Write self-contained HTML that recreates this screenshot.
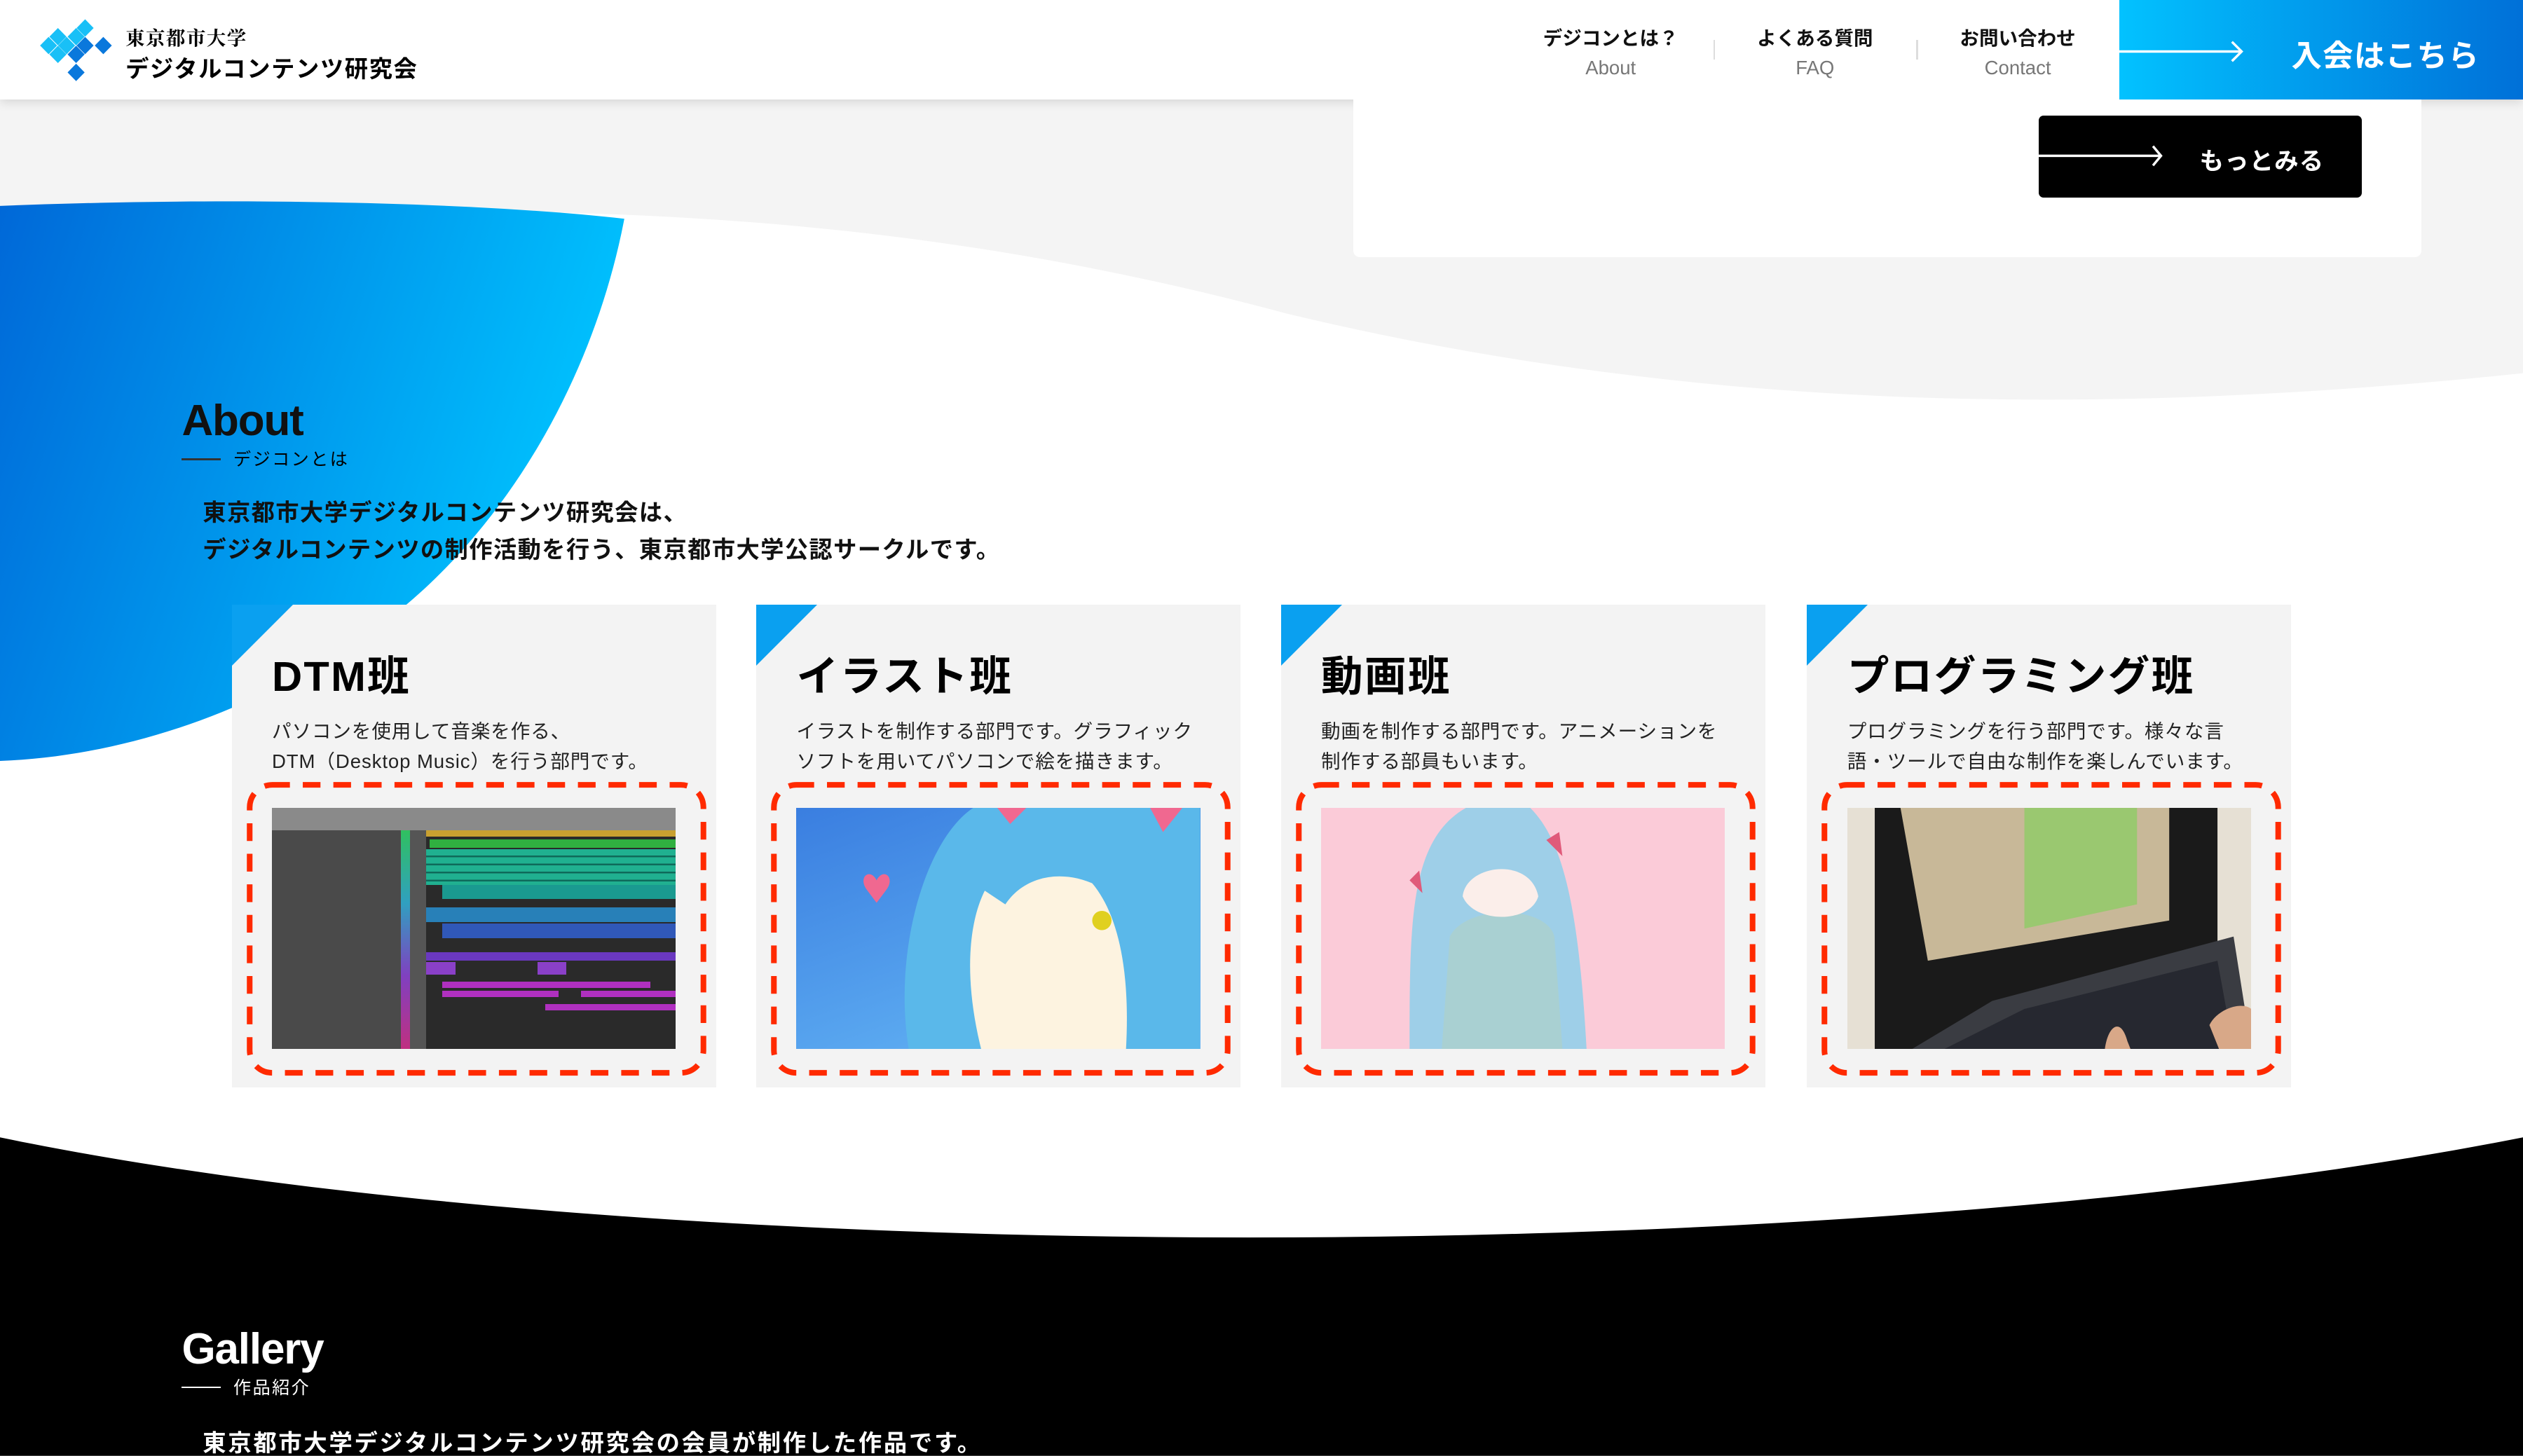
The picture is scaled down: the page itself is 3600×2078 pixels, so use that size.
<!DOCTYPE html>
<html><head><meta charset="utf-8"><style>
html,body{margin:0;padding:0;background:#f4f4f4;overflow:hidden}
#root{width:1568px;height:905px;position:relative;zoom:2.29592;font-family:"Liberation Sans","Noto Sans CJK JP",sans-serif;overflow:hidden;background:#f4f4f4}
.abs{position:absolute}
.nav{position:absolute;top:0;text-align:center;width:120px}
.nav b{display:block;font-size:12px;margin-top:14px;color:#111}
.nav span{display:block;font-size:12px;color:#777;margin-top:4px}
.card{position:absolute;top:376px;width:301px;height:300px;background:#f3f3f3;overflow:hidden}
.card .tri{position:absolute;left:0;top:0;width:0;height:0;border-top:38px solid #0aa0f0;border-right:38px solid transparent}
.card h3{position:absolute;left:25px;margin:0;font-size:26px;font-weight:bold;top:24px;letter-spacing:1px}
.card p{position:absolute;left:25px;top:69px;margin:0;font-size:12px;line-height:19px;letter-spacing:0.4px;color:#222;white-space:nowrap}
.card .img{position:absolute;left:25px;top:126px;width:251px;height:150px;overflow:hidden}
.card svg.dash{position:absolute;left:0;top:0}
</style></head><body><div id="root">
<svg class="abs" style="left:0;top:0" width="1568" height="905">
<path d="M0,136 C300,128 520,120 800,195 C1050,255 1300,260 1568,232 L1568,905 L0,905Z" fill="#fff"/>
<defs><linearGradient id="bg1" x1="0" y1="0" x2="1" y2="0.3"><stop offset="0" stop-color="#0068d8"/><stop offset="1" stop-color="#00c4ff"/></linearGradient>
<linearGradient id="bg2" x1="0" y1="0" x2="1" y2="0"><stop offset="0" stop-color="#02c2ff"/><stop offset="1" stop-color="#0070d8"/></linearGradient></defs>
<path d="M0,128 C150,122 300,126 388,136 C370,230 320,320 250,378 C170,440 80,470 0,473Z" fill="url(#bg1)"/>
<path d="M0,707 C400,790 1150,790 1568,707 L1568,905 L0,905Z" fill="#000"/>
</svg>
<div class="abs" style="left:0;top:0;width:1568px;height:62px;background:#fff;box-shadow:0 2px 6px rgba(0,0,0,.12)"></div>
<svg class="abs" style="left:0;top:0" width="80" height="62">
<g fill="#19c0f7">
<path d="M52.9,12 l5.3,5.4 -5.3,5.4 -5.3,-5.4z"/>
<path d="M36,17.4 l5.3,5.4 -5.3,5.4 -5.3,-5.4z"/>
<path d="M47.3,17.4 l5.3,5.4 -5.3,5.4 -5.3,-5.4z"/>
<path d="M30.2,22.9 l5.3,5.4 -5.3,5.4 -5.3,-5.4z"/>
<path d="M41.4,22.9 l5.3,5.4 -5.3,5.4 -5.3,-5.4z"/>
<path d="M36,28.4 l5.3,5.4 -5.3,5.4 -5.3,-5.4z"/>
</g><g fill="#0a78dc">
<path d="M52.9,22.9 l5.3,5.4 -5.3,5.4 -5.3,-5.4z"/>
<path d="M64.2,22.9 l5.3,5.4 -5.3,5.4 -5.3,-5.4z"/>
<path d="M47.3,28.4 l5.3,5.4 -5.3,5.4 -5.3,-5.4z"/>
<path d="M47.3,39.6 l5.3,5.4 -5.3,5.4 -5.3,-5.4z"/>
</g></svg>
<div class="abs" style="left:78px;top:14px;font-size:12px;font-weight:bold;letter-spacing:0.6px;font-family:'Noto Serif CJK SC',serif">東京都市大学</div>
<div class="abs" style="left:78px;top:31px;font-size:14.5px;font-weight:bold;letter-spacing:0.7px">デジタルコンテンツ研究会</div>
<div class="nav" style="left:941px"><b>デジコンとは？</b><span>About</span></div>
<div class="abs" style="left:1065px;top:25px;width:1px;height:12px;background:#ddd"></div>
<div class="nav" style="left:1068px"><b>よくある質問</b><span>FAQ</span></div>
<div class="abs" style="left:1191px;top:25px;width:1px;height:12px;background:#ddd"></div>
<div class="nav" style="left:1194px"><b>お問い合わせ</b><span>Contact</span></div>
<svg class="abs" style="left:1317px;top:0" width="251" height="62">
<rect width="251" height="62" fill="url(#bg2)"/>
<path d="M0,32 H75 M70,26 L76,32 70,38" stroke="#fff" stroke-width="1.5" fill="none"/>
</svg>
<div class="abs" style="left:1424px;top:19px;color:#fff;font-size:19px;font-weight:bold;letter-spacing:0.5px">入会はこちら</div>
<div class="abs" style="left:841px;top:62px;width:664px;height:98px;background:#fff;border-radius:0 0 4px 4px"></div>
<div class="abs" style="left:1267px;top:72px;width:201px;height:51px;background:#000;border-radius:3px"></div>
<svg class="abs" style="left:1267px;top:72px" width="90" height="51"><path d="M0,25 H75 M71,19 L76,25 71,31" stroke="#fff" stroke-width="1.5" fill="none"/></svg>
<div class="abs" style="left:1367px;top:88px;color:#fff;font-size:15px;font-weight:bold;letter-spacing:0.5px">もっとみる</div>
<div class="abs" style="left:113px;top:246px;font-size:27px;font-weight:bold;color:#111;letter-spacing:-0.5px">About</div>
<div class="abs" style="left:113px;top:285px;width:24px;height:1px;background:#333"></div>
<div class="abs" style="left:145px;top:277px;font-size:11px;letter-spacing:1px">デジコンとは</div>
<div class="abs" style="left:126px;top:308px;font-size:14.5px;font-weight:bold;line-height:23px;color:#111;letter-spacing:0.6px">東京都市大学デジタルコンテンツ研究会は、<br>デジタルコンテンツの制作活動を行う、東京都市大学公認サークルです。</div>

<div class="card" style="left:144px"><div class="tri"></div><h3>DTM班</h3><p>パソコンを使用して音楽を作る、<br>DTM（Desktop Music）を行う部門です。</p>
<div class="img" style="background:#2a2a2a">
<div class="abs" style="left:0;top:0;width:251px;height:14px;background:#8a8a8a"></div>
<div class="abs" style="left:0;top:14px;width:80px;height:136px;background:#4a4a4a"></div>
<div class="abs" style="left:80px;top:14px;width:6px;height:136px;background:linear-gradient(#30c060,#30a0c0,#8040c0,#c03080)"></div>
<div class="abs" style="left:86px;top:14px;width:10px;height:136px;background:#555"></div>
<div class="abs" style="left:96px;top:14px;width:155px;height:4px;background:#c9a030"></div>
<div class="abs" style="left:98px;top:20px;width:153px;height:5px;background:#30b040"></div>
<div class="abs" style="left:96px;top:26px;width:155px;height:22px;background:repeating-linear-gradient(#20b090 0 4px,#0f6a5a 4px 5px)"></div>
<div class="abs" style="left:106px;top:48px;width:145px;height:9px;background:#1a9a90"></div>
<div class="abs" style="left:96px;top:62px;width:155px;height:9px;background:#2880b8"></div>
<div class="abs" style="left:106px;top:72px;width:145px;height:9px;background:#3058b8"></div>
<div class="abs" style="left:96px;top:90px;width:155px;height:5px;background:#6a38c0"></div>
<div class="abs" style="left:96px;top:96px;width:18px;height:8px;background:#8a40c8"></div>
<div class="abs" style="left:165px;top:96px;width:18px;height:8px;background:#8a40c8"></div>
<div class="abs" style="left:106px;top:108px;width:65px;height:4px;background:#b030c0"></div>
<div class="abs" style="left:106px;top:114px;width:72px;height:4px;background:#b030c0"></div>
<div class="abs" style="left:170px;top:108px;width:65px;height:4px;background:#b030c0"></div>
<div class="abs" style="left:192px;top:114px;width:59px;height:4px;background:#b030c0"></div>
<div class="abs" style="left:170px;top:122px;width:81px;height:4px;background:#b030c0"></div>
</div>
<svg class="dash" width="301" height="300"><rect x="11" y="112" width="282" height="179" rx="14" fill="none" stroke="#ff2a00" stroke-width="3.5" stroke-dasharray="11 8"/></svg></div>

<div class="card" style="left:470px"><div class="tri"></div><h3>イラスト班</h3><p>イラストを制作する部門です。グラフィック<br>ソフトを用いてパソコンで絵を描きます。</p>
<div class="img" style="background:linear-gradient(160deg,#3a7ee0,#5aa8f0 70%,#7ab8f4)">
<svg width="251" height="150"><path d="M70,150 C60,90 80,20 110,0 L251,0 L251,150Z" fill="#5ab8ea"/>
<path d="M115,150 C100,90 110,40 140,30 C180,25 210,60 205,150Z" fill="#fdf3e0"/>
<path d="M100,40 C120,0 200,0 230,40 L215,80 C200,40 150,30 130,60Z" fill="#5ab8ea"/>
<path d="M50,45 c-4,-8 -12,-2 -6,6 l6,8 6,-8 c6,-8 -2,-14 -6,-6z" fill="#f06890"/>
<circle cx="190" cy="70" r="6" fill="#e0d020"/>
<path d="M125,0 l8,10 10,-10z M220,0 l8,15 12,-15z" fill="#f06890"/></svg></div>
<svg class="dash" width="301" height="300"><rect x="11" y="112" width="282" height="179" rx="14" fill="none" stroke="#ff2a00" stroke-width="3.5" stroke-dasharray="11 8"/></svg></div>

<div class="card" style="left:796px"><div class="tri"></div><h3>動画班</h3><p>動画を制作する部門です。アニメーションを<br>制作する部員もいます。</p>
<div class="img" style="background:#fbcbd8">
<svg width="251" height="150"><path d="M55,150 C55,70 55,20 90,0 L130,0 C150,20 160,60 165,150Z" fill="#9ecfe8"/>
<path d="M75,150 L80,80 C90,60 140,60 145,80 L150,150Z" fill="#a9d0d2"/>
<path d="M88,55 C90,35 130,30 135,55 C130,72 95,72 88,55Z" fill="#fbeeea"/>
<path d="M140,20 l10,10 -2,-15z M55,45 l8,8 -2,-14z" fill="#e05a7a"/></svg></div>
<svg class="dash" width="301" height="300"><rect x="11" y="112" width="282" height="179" rx="14" fill="none" stroke="#ff2a00" stroke-width="3.5" stroke-dasharray="11 8"/></svg></div>

<div class="card" style="left:1123px"><div class="tri"></div><h3>プログラミング班</h3><p>プログラミングを行う部門です。様々な言<br>語・ツールで自由な制作を楽しんでいます。</p>
<div class="img" style="background:#e6e0d4">
<svg width="251" height="150"><path d="M17,0 L230,0 L230,120 L40,150 L17,150Z" fill="#1a1a1a"/>
<path d="M33,0 L200,0 L200,70 L50,95Z" fill="#c8b898"/>
<path d="M110,0 L180,0 L180,60 L110,75Z" fill="#9ac870"/>
<path d="M40,150 L90,120 L240,80 L251,150Z" fill="#3a3c42"/>
<path d="M60,150 L110,125 L230,95 L240,150Z" fill="#262830"/>
<path d="M160,150 c2,-15 10,-20 14,-5 l2,5z M225,135 c5,-10 20,-15 26,-10 l0,25 -20,0z" fill="#d8a888"/></svg></div>
<svg class="dash" width="301" height="300"><rect x="11" y="112" width="282" height="179" rx="14" fill="none" stroke="#ff2a00" stroke-width="3.5" stroke-dasharray="11 8"/></svg></div>

<div class="abs" style="left:113px;top:823px;font-size:27px;font-weight:bold;color:#fff;letter-spacing:-0.5px">Gallery</div>
<div class="abs" style="left:113px;top:862px;width:24px;height:1px;background:#fff"></div>
<div class="abs" style="left:145px;top:854px;font-size:11px;color:#fff;letter-spacing:1px">作品紹介</div>
<div class="abs" style="left:126px;top:885px;font-size:14.5px;font-weight:bold;color:#fff;letter-spacing:1.2px">東京都市大学デジタルコンテンツ研究会の会員が制作した作品です。</div>
</div></body></html>
